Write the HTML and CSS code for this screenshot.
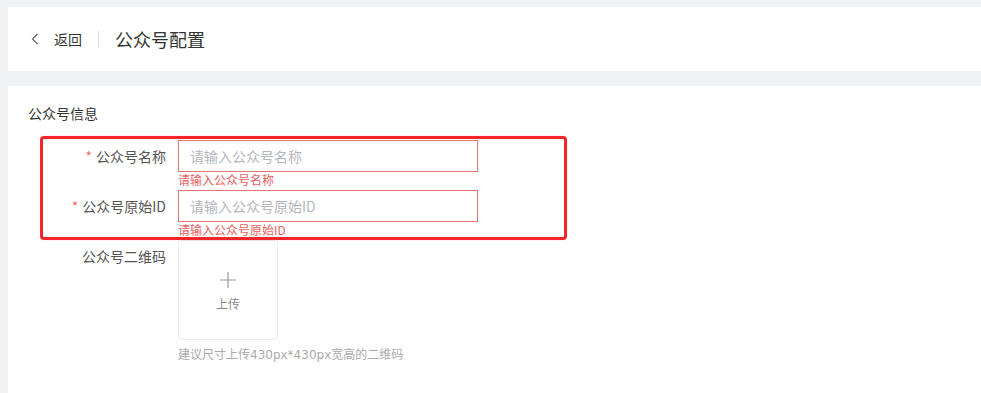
FILE: index.html
```html
<!DOCTYPE html>
<html lang="zh-CN">
<head>
<meta charset="utf-8">
<title>公众号配置</title>
<link rel="stylesheet" href="styles.css">
</head>
<body>
<div class="page">
  <header class="topbar">
    <a class="back">
      <svg class="back-icon" width="8" height="12" viewBox="0 0 8 12"><path d="M6.5 1 L1.5 6 L6.5 11" fill="none" stroke="#666" stroke-width="1.2"/></svg>
      <span>返回</span>
    </a>
    <span class="divider"></span>
    <h1 class="title">公众号配置</h1>
  </header>
  <main class="card">
    <h2 class="section-title">公众号信息</h2>
    <div class="form">
      <div class="mark"></div>
      <div class="form-item">
        <label class="form-label"><span class="req">*</span>公众号名称</label>
        <div class="form-content">
          <input class="input is-error" placeholder="请输入公众号名称">
          <div class="error">请输入公众号名称</div>
        </div>
      </div>
      <div class="form-item">
        <label class="form-label"><span class="req">*</span>公众号原始ID</label>
        <div class="form-content">
          <input class="input is-error" placeholder="请输入公众号原始ID">
          <div class="error">请输入公众号原始ID</div>
        </div>
      </div>
      <div class="form-item">
        <label class="form-label">公众号二维码</label>
        <div class="form-content">
          <div class="upload">
            <svg width="16" height="16" viewBox="0 0 16 16"><path d="M8 0 V16 M0 8 H16" stroke="#999" stroke-width="1.2"/></svg>
            <span class="upload-text">上传</span>
          </div>
          <div class="hint">建议尺寸上传430px*430px宽高的二维码</div>
        </div>
      </div>
    </div>
  </main>
</div>
</body>
</html>
```
FILE: styles.css
```css
* { box-sizing: border-box; }
html, body {
  margin: 0;
  padding: 0;
  height: 100%;
  background: #f0f1f3;
  font-family: "Noto Sans CJK SC", "Noto Sans", sans-serif;
  color: #333;
  overflow: hidden;
}
.page {
  padding: 7px 0 0 8px;
  display: flex;
  flex-direction: column;
  gap: 15px;
}
.topbar {
  height: 64px;
  background: #fff;
  display: flex;
  align-items: center;
  padding-left: 23px;
}
.back {
  display: flex;
  align-items: center;
  font-size: 14px;
  color: #333;
  cursor: pointer;
}
.back-icon { margin-right: 15px; }
.divider {
  width: 1px;
  height: 16px;
  background: #dcdcdc;
  margin: 0 16px;
}
.title {
  margin: 0;
  font-size: 18px;
  font-weight: normal;
  color: #333;
}
.card {
  background: #fff;
  height: 320px;
  padding: 17px 20px 0 20px;
}
.section-title {
  margin: 0 0 16px 0;
  font-size: 14px;
  line-height: 21px;
  font-weight: normal;
  color: #333;
}
.form {
  position: relative;
  display: flex;
  flex-direction: column;
}
.mark {
  position: absolute;
  left: 12px;
  top: -4px;
  width: 527px;
  height: 104px;
  border: 3px solid #f0262a;
  border-radius: 4px;
  box-shadow: 0 0 1px rgba(240, 38, 42, 0.6);
  pointer-events: none;
}
.form-item {
  display: flex;
}
.form-label {
  width: 150px;
  padding-right: 12px;
  text-align: right;
  font-size: 14px;
  line-height: 32px;
  color: #555;
}
.req {
  color: #f56c6c;
  margin-right: 4px;
}
.form-content {
  display: flex;
  flex-direction: column;
  align-items: flex-start;
}
.input {
  width: 300px;
  height: 32px;
  border: 1px solid #dcdfe6;
  border-radius: 0;
  padding: 0 11px;
  font-family: inherit;
  font-size: 14px;
  color: #333;
  outline: none;
  background: #fff;
}
.input.is-error { border-color: #e57373; }
.input::placeholder { color: #b4b7be; }
.error {
  font-size: 12px;
  line-height: 16px;
  height: 18px;
  color: #ea6060;
}
.upload {
  width: 100px;
  height: 100px;
  border: 1px solid #ebeef2;
  border-radius: 4px;
  display: flex;
  flex-direction: column;
  align-items: center;
  padding-top: 31px;
  gap: 8px;
}
.upload-text {
  font-size: 12px;
  line-height: 16px;
  color: #888;
}
.hint {
  margin-top: 6px;
  font-family: "DejaVu Sans", "Noto Sans CJK SC", sans-serif;
  font-size: 12px;
  line-height: 18px;
  color: #aaa;
}
```
